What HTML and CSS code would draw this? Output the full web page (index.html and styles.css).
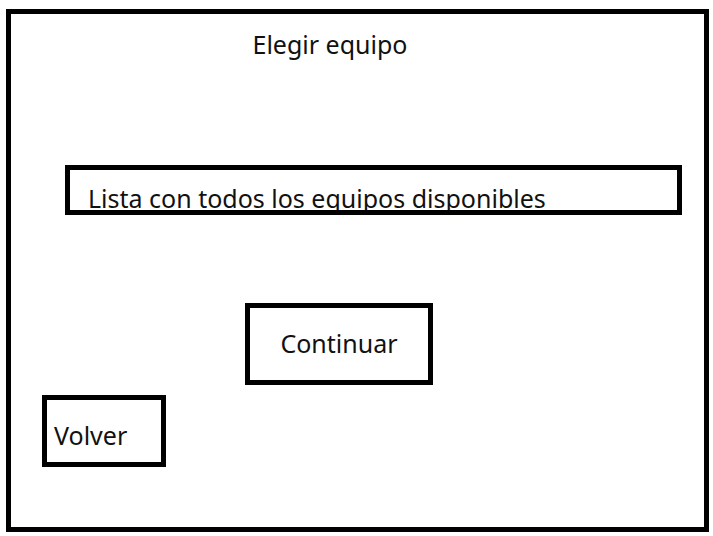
FILE: index.html
```html
<!DOCTYPE html>
<html lang="es">
<head>
<meta charset="utf-8">
<title>Elegir equipo</title>
<link rel="stylesheet" href="styles.css">
</head>
<body>
<main class="screen">
  <h1 class="title">Elegir equipo</h1>
  <div class="team-list">Lista con todos los equipos disponibles</div>
  <button class="button continue" type="button">Continuar</button>
  <button class="button back" type="button">Volver</button>
</main>
</body>
</html>
```
FILE: styles.css
```css
* {
  box-sizing: border-box;
}

body {
  margin: 0;
  padding: 9px 4px 4px 6px;
  min-height: 100vh;
  display: flex;
  background: #fff;
  color: #111;
  font-family: "Noto Sans", "Open Sans", sans-serif;
  font-size: 25px;
  line-height: 36px;
}

.screen {
  flex: 1;
  display: flex;
  flex-direction: column;
  align-items: flex-start;
  border: 5px solid #000;
  padding: 12px 22px 56px 31px;
}

.title {
  margin: 0 0 103px;
  padding-right: 64px;
  align-self: center;
  font-size: inherit;
  font-weight: 400;
}

.team-list {
  align-self: stretch;
  height: 50px;
  margin: 0 0 88px 23px;
  padding: 10px 18px 0;
  border: 5px solid #000;
  overflow: hidden;
  white-space: nowrap;
}

.button {
  border: 5px solid #000;
  background: #fff;
  color: inherit;
  font: inherit;
  text-align: left;
}

.continue {
  align-self: center;
  width: 188px;
  height: 82px;
  margin: 0 46px 10px 0;
  padding: 0 0 2px;
  text-align: center;
}

.back {
  width: 124px;
  height: 72px;
  padding: 8px 7px 0;
}
```
